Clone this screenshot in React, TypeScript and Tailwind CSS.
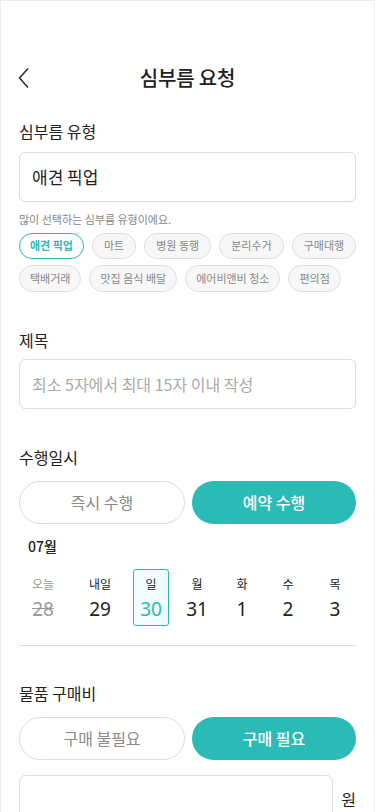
import React, { useState } from 'react';

const chipsRow1 = ['애견 픽업', '마트', '병원 동행', '분리수거', '구매대행'];
const chipsRow2 = ['택배거래', '맛집 음식 배달', '에어비앤비 청소', '편의점'];

const days = [
  { label: '오늘', num: '28', past: true, ml: 'ml-[24px]' },
  { label: '내일', num: '29', ml: 'ml-[21px]' },
  { label: '일', num: '30', ml: 'ml-[15px]' },
  { label: '월', num: '31', ml: 'ml-[10px]' },
  { label: '화', num: '1', ml: 'ml-[9px]' },
  { label: '수', num: '2', ml: 'ml-[10px]' },
  { label: '목', num: '3', ml: 'ml-[11px]' },
];

const Toggle = ({ left, right }: { left: string; right: string }) => (
  <div className="flex gap-[7px] mt-[13px]">
    <button className="flex-1 h-[43px] rounded-full border border-[#dcdcdc] bg-white text-[16px] text-[#8a8a8a]">
      {left}
    </button>
    <button className="flex-1 h-[43px] rounded-full bg-[#2bbbb6] text-[16px] font-medium text-white">
      {right}
    </button>
  </div>
);

export default function App() {
  const [selected, setSelected] = useState(2);

  return (
    <div
      className="w-[375px] h-[812px] overflow-hidden bg-white border-x border-t border-[#ececec] text-[#222]"
      style={{ fontFamily: '"Noto Sans CJK KR", "Noto Sans", sans-serif' }}
    >
      {/* Header */}
      <div className="relative h-[56px] mt-[49px] flex items-center justify-center">
        <button className="absolute left-[16px] top-[17px]">
          <svg width="14" height="22" viewBox="0 0 14 22" fill="none">
            <path d="M11 1.5L2.5 11L11 20.5" stroke="#222" strokeWidth="1.4" />
          </svg>
        </button>
        <h1 className="text-[20px] font-medium tracking-[-0.2px]">심부름 요청</h1>
      </div>

      <div className="px-[18px]">
        {/* 심부름 유형 */}
        <p className="mt-[14px] text-[16px] leading-[22px]">심부름 유형</p>
        <div className="mt-[10px] h-[50px] rounded-[6px] border border-[#dcdcdc] flex items-center px-[12px] text-[17px]">
          애견 픽업
        </div>
        <p className="mt-[9px] text-[11px] text-[#888]">많이 선택하는 심부름 유형이에요.</p>
        <div className="mt-[5px] flex gap-[8px] whitespace-nowrap">
          {chipsRow1.map((c, i) => (
            <span
              key={c}
              className={
                i === 0
                  ? 'shrink-0 h-[26px] px-[10px] rounded-full border border-[#2bbbb6] bg-white text-[11px] font-bold text-[#2bbbb6] flex items-center'
                  : 'shrink-0 h-[26px] px-[11px] rounded-full border border-[#dedede] bg-[#f7f7f7] text-[11px] text-[#888] flex items-center'
              }
            >
              {c}
            </span>
          ))}
        </div>
        <div className="mt-[6px] flex gap-[8px] whitespace-nowrap">
          {chipsRow2.map((c) => (
            <span
              key={c}
              className="shrink-0 h-[27px] px-[10px] rounded-full border border-[#dedede] bg-[#f7f7f7] text-[11px] text-[#888] flex items-center"
            >
              {c}
            </span>
          ))}
        </div>

        {/* 제목 */}
        <p className="mt-[37px] text-[16px] leading-[22px]">제목</p>
        <div className="mt-[8px] h-[50px] rounded-[6px] border border-[#dcdcdc] flex items-center px-[12px] text-[16px] text-[#aaa]">
          최소 5자에서 최대 15자 이내 작성
        </div>

        {/* 수행일시 */}
        <p className="mt-[37px] text-[16px] leading-[22px]">수행일시</p>
        <Toggle left="즉시 수행" right="예약 수행" />
        <p className="mt-[12px] ml-[9px] text-[14px] font-medium">07월</p>
        <div className="flex mt-[12px] -mx-[18px]">
          {days.map((d, i) => (
            <button
              key={d.num}
              onClick={() => !d.past && setSelected(i)}
              className={`${d.ml} w-[36px] h-[57px] flex flex-col items-center pt-[5px] rounded-[3px] border ${
                selected === i ? 'border-[#2bbbb6] bg-[#f1fdfc]' : 'border-transparent'
              }`}
            >
              <span className={`text-[12px] leading-[18px] ${d.past ? 'text-[#999]' : 'text-[#222]'}`}>
                {d.label}
              </span>
              <span
                className={`mt-[3px] text-[19px] leading-[26px] ${
                  d.past
                    ? 'text-[#999] line-through'
                    : selected === i
                      ? 'text-[#2bbbb6]'
                      : 'text-[#222]'
                }`}
                style={{ fontFamily: '"Noto Sans", sans-serif' }}
              >
                {d.num}
              </span>
            </button>
          ))}
        </div>
        <div className="mt-[19px] h-px bg-[#dcdcdc]" />

        {/* 물품 구매비 */}
        <p className="mt-[36px] text-[16px] leading-[22px]">물품 구매비</p>
        <Toggle left="구매 불필요" right="구매 필요" />
        <div className="mt-[15px] flex items-start gap-[8px]">
          <div className="flex-1 h-[50px] rounded-[6px] border border-[#dcdcdc]" />
          <span className="mt-[13px] text-[16px] leading-[22px]">원</span>
        </div>
      </div>
    </div>
  );
}
